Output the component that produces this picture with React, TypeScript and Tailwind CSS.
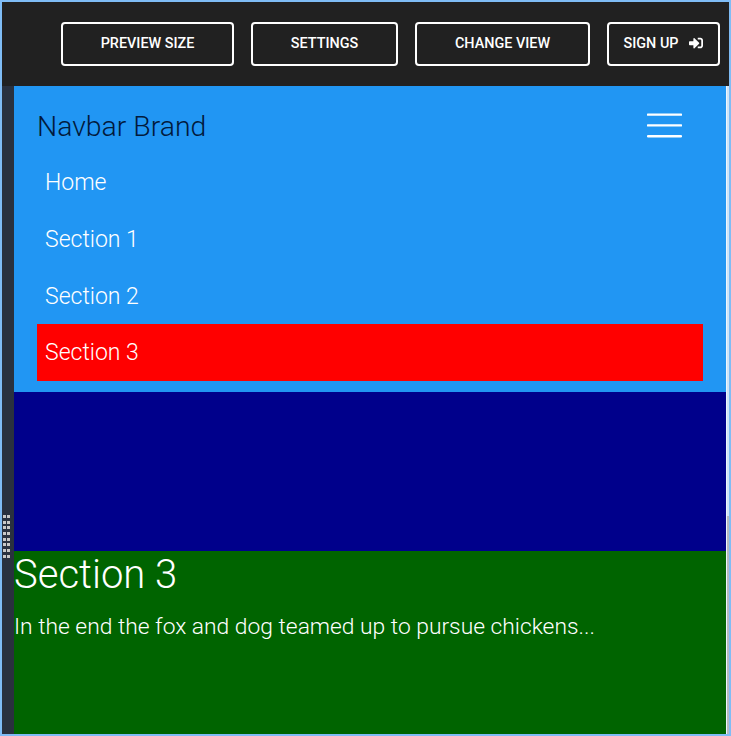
import React from "react";
import { FaSignInAlt } from "react-icons/fa";

const btn = "h-11 flex items-center justify-center border-2 border-white rounded-[4px] text-white text-[14.4px] font-medium pb-[1px] shrink-0";
const items = ["Home", "Section 1", "Section 2", "Section 3"];

export default function App() {
  return (
    <div className="w-[731px] h-[736px] overflow-hidden border-2 border-[#7fbcf5] bg-[#29313f] flex flex-col relative" style={{ fontFamily: "Roboto, sans-serif" }}>
      <div className="h-[84px] shrink-0 bg-[#212121] flex items-center pl-[59px] gap-[17px]">
        <div className={`${btn} w-[173px]`}>PREVIEW SIZE</div>
        <div className={`${btn} w-[147px]`}>SETTINGS</div>
        <div className={`${btn} w-[175px]`}>CHANGE VIEW</div>
        <div className={`${btn} w-[113px] gap-[11px]`}>SIGN UP <FaSignInAlt className="w-[14px] h-[14px] -mt-[1px]" /></div>
      </div>
      <div className="flex-1 flex min-h-0">
        <div className="w-3 shrink-0 bg-[#29313f]" />
        <div className="w-[712px] shrink-0 flex flex-col font-light">
          <div className="h-[306px] bg-[#2196f3] px-[23px] flex flex-col">
            <div className="h-[67px] flex justify-between">
              <span className="text-[28.4px] text-[#021a3c] leading-none mt-[27px]">Navbar Brand</span>
              <svg className="mr-[21px] mt-[26px]" width="35" height="26" viewBox="0 0 35 26" fill="none" stroke="#ffffff" strokeWidth="2.4" strokeLinecap="round">
                <path d="M1 2.6H34M1 13.4H34M1 24.2H34" />
              </svg>
            </div>
            {items.map((t, i) => (
              <div key={t} className={`h-[57px] shrink-0 flex items-center px-2 text-[23px] text-white ${i === 3 ? "bg-[#ff0000] pt-[2px]" : "pt-[4px]"}`}>{t}</div>
            ))}
          </div>
          <div className="h-[159px] bg-[#00008b]" />
          <div className="flex-1 bg-[#006400] text-white">
            <div className="text-[40px] leading-[48px]">Section 3</div>
            <p className="text-[22.8px] leading-[34px] mt-[11px]">In the end the fox and dog teamed up to pursue chickens...</p>
          </div>
        </div>
        <div className="w-[1px] bg-[#eef6fd]" />
        <div className="flex-1 bg-[#cfe4f8] flex flex-col justify-end">
          <div className="h-[218px] bg-[#b4b9bf]" />
        </div>
      </div>
      <div className="absolute left-[1px] top-[513px] grid grid-cols-2 gap-x-[1px] gap-y-[2.7px]">
        {Array.from({ length: 16 }).map((_, i) => (
          <div key={i} className="w-[3px] h-[3px] bg-[#c8c8c8]" />
        ))}
      </div>
    </div>
  );
}
